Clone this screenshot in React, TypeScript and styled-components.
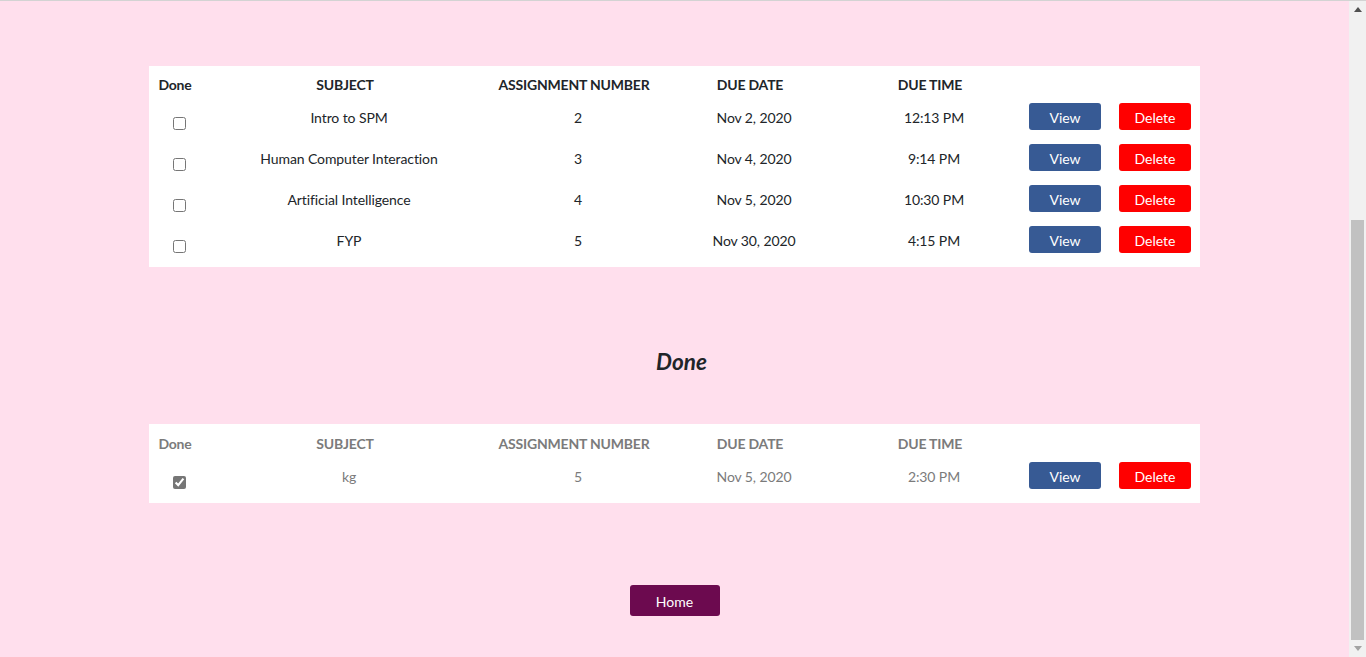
import React from "react";
import styled, { createGlobalStyle } from "styled-components";

const GlobalStyle = createGlobalStyle`
  html, body {
    margin: 0;
    padding: 0;
    overflow: hidden;
    background: #ffdfed;
  }
  * { box-sizing: border-box; }
`;

const Window = styled.div`
  display: flex;
  height: 657px;
  border-top: 1px solid #d3d3d3;
  font-family: Lato, "Open Sans", sans-serif;
`;

const Page = styled.main`
  flex: 1;
  display: flex;
  flex-direction: column;
  align-items: center;
  padding-top: 65px;
  background: #ffdfed;
`;

const Table = styled.div<{ $muted?: boolean }>`
  width: 1051px;
  background: #ffffff;
  color: ${(p) => (p.$muted ? "#7b7b7b" : "#212529")};
`;

const cols = "60px 280px 178px 174px 186px 1fr";

const HeadRow = styled.div<{ $h: number }>`
  display: grid;
  grid-template-columns: ${cols};
  height: ${(p) => p.$h}px;
  align-items: center;
`;

const Th = styled.div`
  text-align: center;
  font-size: 14px;
  font-weight: 700;
  padding-right: 8px;
  white-space: nowrap;
  letter-spacing: -0.2px;
`;

const Row = styled.div`
  display: grid;
  grid-template-columns: ${cols};
  height: 41px;
  padding-bottom: 14px;
  align-items: center;
`;

const Td = styled.div`
  text-align: center;
  font-size: 14px;
  white-space: nowrap;
  letter-spacing: -0.1px;
  padding-top: 1px;
`;

const CheckCell = styled.div`
  display: flex;
  justify-content: center;
  align-self: stretch;
`;

const Check = styled.input`
  width: 13px;
  height: 13px;
  margin: 14px 0 0 1px;
  accent-color: #767676;
`;

const Actions = styled.div`
  display: flex;
  gap: 18px;
  padding-left: 2px;
`;

const Btn = styled.button<{ $variant: "view" | "delete" | "home" }>`
  width: ${(p) => (p.$variant === "home" ? "90px" : "72px")};
  height: ${(p) => (p.$variant === "home" ? "31px" : "27px")};
  border: none;
  border-radius: 3px;
  color: #ffffff;
  font-family: Lato, "Open Sans", sans-serif;
  font-size: 14px;
  padding: 2px 0 0;
  background: ${(p) =>
    p.$variant === "view" ? "#375a94" : p.$variant === "delete" ? "#ff0000" : "#6c0a4f"};
`;

const Heading = styled.h2`
  margin: 80px 0 47px;
  height: 30px;
  line-height: 30px;
  font-size: 22.5px;
  font-style: italic;
  font-weight: 700;
  color: #212529;
  text-align: center;
  padding-left: 14px;
`;

const HomeWrap = styled.div`
  margin-top: 82px;
`;

const Scrollbar = styled.div`
  width: 17px;
  display: flex;
  flex-direction: column;
  background: #f1f1f1;
`;

const Arrow = styled.div`
  height: 17px;
  display: flex;
  align-items: center;
  justify-content: center;
`;

const Spacer = styled.div`
  flex: 1;
`;

const Thumb = styled.div`
  height: 420px;
  margin: 0 2px;
  background: #c1c1c1;
`;

type Item = { subject: string; num: number; date: string; time: string };

const todo: Item[] = [
  { subject: "Intro to SPM", num: 2, date: "Nov 2, 2020", time: "12:13 PM" },
  { subject: "Human Computer Interaction", num: 3, date: "Nov 4, 2020", time: "9:14 PM" },
  { subject: "Artificial Intelligence", num: 4, date: "Nov 5, 2020", time: "10:30 PM" },
  { subject: "FYP", num: 5, date: "Nov 30, 2020", time: "4:15 PM" },
];

const done: Item[] = [{ subject: "kg", num: 5, date: "Nov 5, 2020", time: "2:30 PM" }];

function AssignmentTable({ items, isDone }: { items: Item[]; isDone?: boolean }) {
  return (
    <Table $muted={isDone}>
      <HeadRow $h={isDone ? 38 : 37}>
        <Th>Done</Th>
        <Th>SUBJECT</Th>
        <Th>ASSIGNMENT NUMBER</Th>
        <Th>DUE DATE</Th>
        <Th>DUE TIME</Th>
        <div />
      </HeadRow>
      {items.map((it) => (
        <Row key={it.subject}>
          <CheckCell>
            <Check type="checkbox" defaultChecked={isDone} />
          </CheckCell>
          <Td>{it.subject}</Td>
          <Td>{it.num}</Td>
          <Td>{it.date}</Td>
          <Td>{it.time}</Td>
          <Actions>
            <Btn $variant="view">View</Btn>
            <Btn $variant="delete">Delete</Btn>
          </Actions>
        </Row>
      ))}
    </Table>
  );
}

export default function App() {
  return (
    <>
      <GlobalStyle />
      <Window>
        <Page>
          <AssignmentTable items={todo} />
          <Heading>Done</Heading>
          <AssignmentTable items={done} isDone />
          <HomeWrap>
            <Btn $variant="home">Home</Btn>
          </HomeWrap>
        </Page>
        <Scrollbar>
          <Arrow>
            <svg width="8" height="5" viewBox="0 0 8 5">
              <path d="M0 5 L4 0 L8 5 Z" fill="#505050" />
            </svg>
          </Arrow>
          <Spacer />
          <Thumb />
          <Arrow>
            <svg width="8" height="5" viewBox="0 0 8 5">
              <path d="M0 0 L4 5 L8 0 Z" fill="#a3a3a3" />
            </svg>
          </Arrow>
        </Scrollbar>
      </Window>
    </>
  );
}
